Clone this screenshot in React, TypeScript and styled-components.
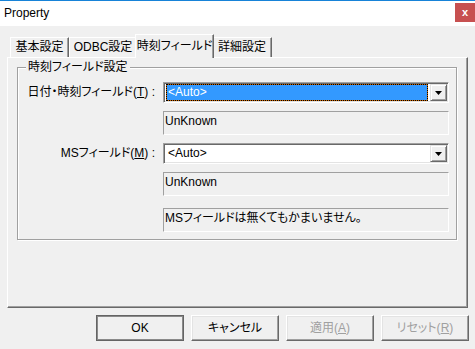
import React from "react";
import styled, { createGlobalStyle, css } from "styled-components";

const GlobalStyle = createGlobalStyle`
  html, body { margin: 0; padding: 0; background: #f0f0f0; }
  body {
    font-family: "Liberation Sans", "Noto Sans CJK JP", sans-serif;
    font-size: 12px;
    line-height: 15px;
    color: #000;
    font-feature-settings: "palt";
  }
  * { box-sizing: border-box; }
`;

const Window = styled.div`
  width: 475px;
  height: 349px;
  background: #f0f0f0;
  display: flex;
  flex-direction: column;
  overflow: hidden;
`;

const TitleBar = styled.div`
  height: 26px;
  flex: none;
  background: #fff;
  border-top: 1px solid #1783d8;
  display: flex;
  align-items: flex-start;
  justify-content: space-between;
`;

const Title = styled.span`
  padding-left: 4px;
  margin-top: 5px;
  font-size: 12px;
  line-height: 15px;
`;

const CloseButton = styled.div`
  width: 20px;
  height: 19px;
  margin-top: 2px;
  background: #c75050;
  color: #fff;
  font-weight: bold;
  font-size: 11px;
  line-height: 17px;
  display: flex;
  align-items: center;
  justify-content: center;
`;

const Body = styled.div`
  padding-top: 7px;
  display: flex;
  flex-direction: column;
`;

const TabStrip = styled.div`
  display: flex;
  align-items: flex-end;
  height: 25px;
  padding-left: 10px;
  margin-bottom: -1px;
  position: relative;
  z-index: 1;
`;

const Tab = styled.div<{ $active?: boolean; $w: number }>`
  width: ${(p) => p.$w}px;
  height: 20px;
  margin-bottom: 1px;
  background: #f0f0f0;
  border-top: 1px solid #fff;
  border-left: 1px solid #fff;
  border-right: 1px solid #696969;
  box-shadow: inset -1px 0 0 #a0a0a0;
  display: flex;
  align-items: center;
  justify-content: center;
  white-space: nowrap;
  position: relative;
  ${(p) =>
    p.$active &&
    css`
      height: 24px;
      margin: 0 -2px 0 -2px;
      z-index: 2;
      padding-bottom: 1px;
    `}
`;

const Panel = styled.div`
  margin-left: 7px;
  width: 461px;
  height: 251px;
  border: 1px solid;
  border-color: #fff #696969 #696969 #fff;
  box-shadow: inset -1px -1px 0 #a0a0a0;
  display: flex;
  flex-direction: column;
`;

const GroupBox = styled.div`
  position: relative;
  margin: 9px 0 0 9px;
  width: 440px;
  border: 1px solid #a0a0a0;
  box-shadow: 1px 1px 0 #fff, inset 1px 1px 0 #fff;
`;

const Legend = styled.span`
  position: absolute;
  top: -8px;
  left: 8px;
  padding: 0 2px;
  background: #f0f0f0;
  line-height: 15px;
  white-space: nowrap;
`;

const FormGrid = styled.div`
  display: grid;
  grid-template-columns: 1fr 286px;
  column-gap: 8px;
  row-gap: 8px;
  padding: 14px 7px 7px 0;
  align-items: center;
`;

const Label = styled.label`
  text-align: right;
  white-space: nowrap;
`;

const Combo = styled.div`
  grid-column: 2;
  height: 21px;
  border: 1px solid;
  border-color: #a0a0a0 #fff #fff #a0a0a0;
  box-shadow: inset 1px 1px 0 #696969, inset -1px -1px 0 #e3e3e3;
  background: #fff;
  display: flex;
  padding: 1px;
`;

const ComboValue = styled.div<{ $selected?: boolean }>`
  flex: 1;
  height: 17px;
  margin: 0 2px 0 1px;
  padding-left: 1px;
  line-height: 17px;
  white-space: nowrap;
  border: 1px solid transparent;
  display: flex;
  align-items: center;
  ${(p) =>
    p.$selected &&
    css`
      background: #3399ff;
      color: #fff;
      border-color: #cc6600;
      outline: 1px dotted #000;
      outline-offset: -1px;
    `}
`;

const DropButton = styled.div`
  width: 17px;
  height: 17px;
  flex: none;
  border: 1px solid;
  border-color: #e3e3e3 #696969 #696969 #e3e3e3;
  box-shadow: inset 1px 1px 0 #fff, inset -1px -1px 0 #a0a0a0;
  background: #f0f0f0;
  display: flex;
  align-items: center;
  justify-content: center;
`;

const StaticBox = styled.div<{ $gapTop?: number }>`
  grid-column: 2;
  height: 24px;
  border: 1px solid;
  border-color: #a0a0a0 #fff #fff #a0a0a0;
  padding: 2px 0 0 1px;
  white-space: nowrap;
  margin-top: ${(p) => p.$gapTop ?? 0}px;
`;

const ButtonRow = styled.div`
  display: flex;
  justify-content: flex-end;
  gap: 7px;
  padding-right: 6px;
  margin-top: 7px;
`;

const PushButton = styled.button<{ $default?: boolean }>`
  width: 88px;
  height: 26px;
  padding: 0;
  font: inherit;
  font-feature-settings: "palt";
  background: #f0f0f0;
  color: #000;
  border: 1px solid;
  border-color: #fff #696969 #696969 #fff;
  box-shadow: inset -1px -1px 0 #a0a0a0, inset 1px 1px 0 #e3e3e3;
  display: flex;
  align-items: center;
  justify-content: center;
  &:disabled {
    color: #a0a0a0;
  }
  ${(p) =>
    p.$default &&
    css`
      border-color: #646464;
      box-shadow: inset 0 0 0 1px #8a8a8a;
    `}
`;

const Arrow = () => (
  <svg width="7" height="4" viewBox="0 0 7 4">
    <polygon points="0,0 7,0 3.5,4" fill="#000" />
  </svg>
);

export default function App() {
  return (
    <>
      <GlobalStyle />
      <Window>
        <TitleBar>
          <Title>Property</Title>
          <CloseButton>x</CloseButton>
        </TitleBar>
        <Body>
          <TabStrip>
            <Tab $w={59}>基本設定</Tab>
            <Tab $w={68}>ODBC設定</Tab>
            <Tab $w={79} $active>
              時刻フィールド
            </Tab>
            <Tab $w={60}>詳細設定</Tab>
          </TabStrip>
          <Panel>
            <GroupBox>
              <Legend>時刻フィールド設定</Legend>
              <FormGrid>
                <Label>
                  日付・時刻フィールド(<u>T</u>) :
                </Label>
                <Combo>
                  <ComboValue $selected>&lt;Auto&gt;</ComboValue>
                  <DropButton>
                    <Arrow />
                  </DropButton>
                </Combo>
                <StaticBox>UnKnown</StaticBox>
                <Label>
                  MSフィールド(<u>M</u>) :
                </Label>
                <Combo>
                  <ComboValue>&lt;Auto&gt;</ComboValue>
                  <DropButton>
                    <Arrow />
                  </DropButton>
                </Combo>
                <StaticBox>UnKnown</StaticBox>
                <StaticBox $gapTop={4}>MSフィールドは無くてもかまいません。</StaticBox>
              </FormGrid>
            </GroupBox>
          </Panel>
          <ButtonRow>
            <PushButton $default>OK</PushButton>
            <PushButton>キャンセル</PushButton>
            <PushButton disabled>
              適用(<u>A</u>)
            </PushButton>
            <PushButton disabled>
              リセット(<u>R</u>)
            </PushButton>
          </ButtonRow>
        </Body>
      </Window>
    </>
  );
}
